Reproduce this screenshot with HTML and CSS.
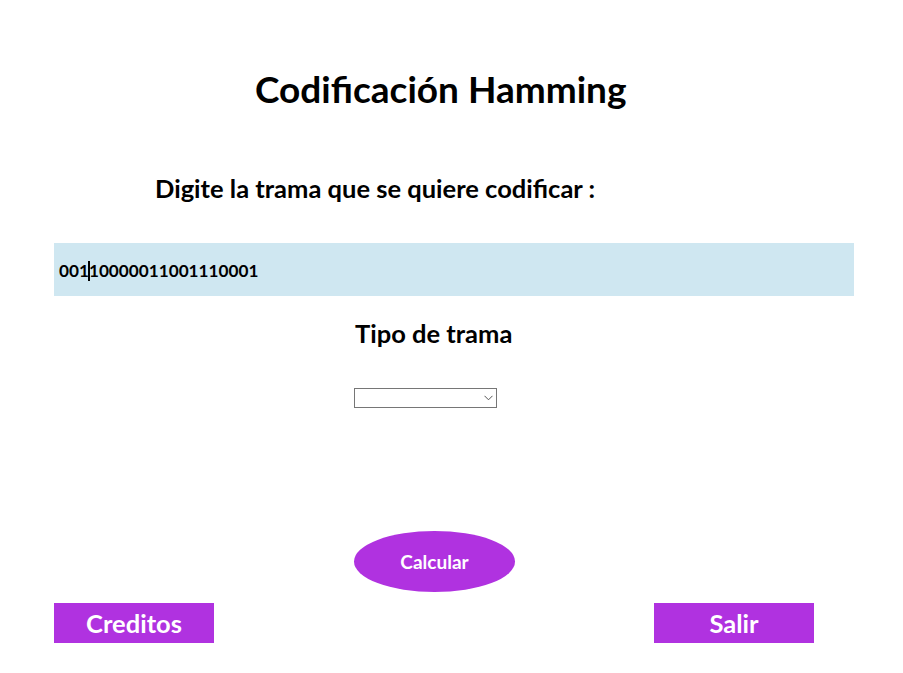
FILE: index.html
```html
<!DOCTYPE html>
<html lang="es">
<head>
<meta charset="utf-8">
<title>Codificación Hamming</title>
<link rel="stylesheet" href="styles.css">
</head>
<body>
<div class="page">
  <h1 class="title">Codificación Hamming</h1>
  <p class="prompt">Digite la trama que se quiere codificar :</p>
  <div class="input-band">
    <span class="bits">001<span class="caret"></span>10000011001110001</span>
  </div>
  <div class="center-col">
    <p class="label">Tipo de trama</p>
    <div class="select">
      <svg class="chev" width="9" height="6" viewBox="0 0 9 6"><path d="M0.5 0.8 L4.5 4.8 L8.5 0.8" fill="none" stroke="#555" stroke-width="1"/></svg>
    </div>
    <div class="calc">Calcular</div>
  </div>
  <div class="bottom">
    <div class="btn">Creditos</div>
    <div class="btn">Salir</div>
  </div>
</div>
</body>
</html>
```
FILE: styles.css
```css
html, body {
  margin: 0;
  padding: 0;
  background: #ffffff;
}
body {
  font-family: Lato, "Open Sans", sans-serif;
  font-weight: 700;
  color: #000;
}
.page {
  width: 903px;
  height: 673px;
  padding: 0 49px 0 54px;
  box-sizing: border-box;
  display: flex;
  flex-direction: column;
}
.title {
  margin: 67px 0 0 201px;
  font-size: 37px;
  line-height: 44px;
  font-weight: 700;
}
.prompt {
  margin: 62px 0 0 101px;
  font-size: 25.5px;
  line-height: 30px;
}
.input-band {
  margin-top: 40px;
  height: 53px;
  background: #cfe7f1;
  display: flex;
  align-items: center;
  padding-left: 5px;
  padding-top: 2px;
  box-sizing: border-box;
}
.bits {
  font-size: 17.2px;
  display: inline-flex;
  align-items: center;
}
.caret {
  display: inline-block;
  width: 2px;
  height: 20px;
  background: #000;
  margin: 0 -1px;
}
.center-col {
  margin-left: 300px;
  display: flex;
  flex-direction: column;
  align-items: flex-start;
}
.label {
  margin: 21px 0 0 1px;
  font-size: 25.5px;
  line-height: 32px;
}
.select {
  margin-top: 39px;
  width: 143px;
  height: 20px;
  border: 1px solid #767676;
  box-sizing: border-box;
  display: flex;
  align-items: center;
  justify-content: flex-end;
  padding-right: 3px;
}
.calc {
  margin-top: 123px;
  width: 161px;
  height: 61px;
  border-radius: 50%;
  background: #b032e0;
  color: #fff;
  font-size: 19px;
  display: flex;
  align-items: center;
  justify-content: center;
}
.bottom {
  margin-top: 11px;
  display: flex;
  justify-content: space-between;
  width: 760px;
}
.btn {
  width: 160px;
  height: 40px;
  background: #b032e0;
  color: #fff;
  font-size: 25.5px;
  display: flex;
  align-items: center;
  justify-content: center;
}
```
